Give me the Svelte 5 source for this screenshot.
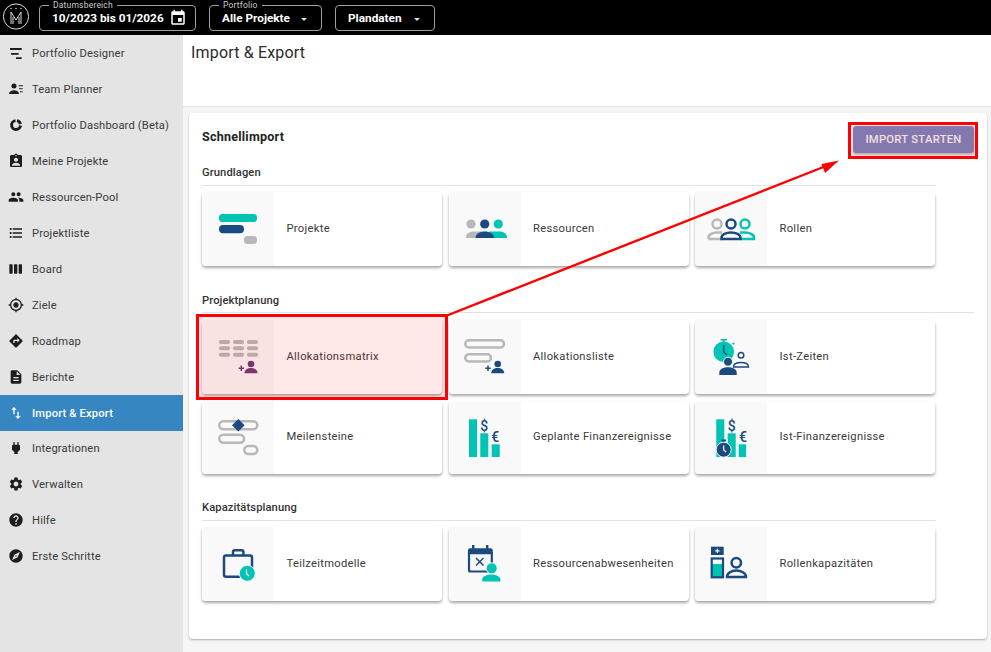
<script>
  const nav = [
    { label: 'Portfolio Designer', icon: 'designer' },
    { label: 'Team Planner', icon: 'team' },
    { label: 'Portfolio Dashboard (Beta)', icon: 'donut' },
    { label: 'Meine Projekte', d: 'M19 3h-4.18C14.4 1.84 13.3 1 12 1c-1.3 0-2.4.84-2.82 2H5c-1.1 0-2 .9-2 2v14c0 1.1.9 2 2 2h14c1.1 0 2-.9 2-2V5c0-1.1-.9-2-2-2zm-7 0c.55 0 1 .45 1 1s-.45 1-1 1-1-.45-1-1 .45-1 1-1zm0 4c1.66 0 3 1.34 3 3s-1.34 3-3 3-3-1.34-3-3 1.34-3 3-3zm6 12H6v-1.4c0-2 4-3.1 6-3.1s6 1.1 6 3.1V19z' },
    { label: 'Ressourcen-Pool', d: 'M16 11c1.66 0 2.99-1.34 2.99-3S17.66 5 16 5c-1.66 0-3 1.34-3 3s1.34 3 3 3zm-8 0c1.66 0 2.99-1.34 2.99-3S9.66 5 8 5C6.34 5 5 6.34 5 8s1.34 3 3 3zm0 2c-2.33 0-7 1.17-7 3.5V19h14v-2.5c0-2.33-4.67-3.5-7-3.5zm8 0c-.29 0-.62.02-.97.05 1.16.84 1.97 1.97 1.97 3.45V19h6v-2.5c0-2.33-4.67-3.5-7-3.5z' },
    { label: 'Projektliste', d: 'M4 10.5c-.83 0-1.5.67-1.5 1.5s.67 1.5 1.5 1.5 1.5-.67 1.5-1.5-.67-1.5-1.5-1.5zm0-6c-.83 0-1.5.67-1.5 1.5S3.17 7.5 4 7.5 5.5 6.83 5.5 6 4.83 4.5 4 4.5zm0 12c-.83 0-1.5.68-1.5 1.5s.68 1.5 1.5 1.5 1.5-.68 1.5-1.5-.67-1.5-1.5-1.5zM7 19h14v-2H7v2zm0-6h14v-2H7v2zm0-8v2h14V5H7z' },
    { label: 'Board', d: 'M6 5H3c-.55 0-1 .45-1 1v12c0 .55.45 1 1 1h3c.55 0 1-.45 1-1V6c0-.55-.45-1-1-1zm14 0h-3c-.55 0-1 .45-1 1v12c0 .55.45 1 1 1h3c.55 0 1-.45 1-1V6c0-.55-.45-1-1-1zm-7 0h-3c-.55 0-1 .45-1 1v12c0 .55.45 1 1 1h3c.55 0 1-.45 1-1V6c0-.55-.45-1-1-1z' },
    { label: 'Ziele', d: 'M12 8c-2.21 0-4 1.79-4 4s1.79 4 4 4 4-1.79 4-4-1.79-4-4-4zm8.94 3c-.46-4.17-3.77-7.48-7.94-7.94V1h-2v2.06C6.83 3.52 3.52 6.83 3.06 11H1v2h2.06c.46 4.17 3.77 7.48 7.94 7.94V23h2v-2.06c4.17-.46 7.48-3.77 7.94-7.94H23v-2h-2.06zM12 19c-3.87 0-7-3.13-7-7s3.13-7 7-7 7 3.13 7 7-3.13 7-7 7z' },
    { label: 'Roadmap', d: 'M21.71 11.29l-9-9c-.39-.39-1.02-.39-1.41 0l-9 9c-.39.39-.39 1.02 0 1.41l9 9c.39.39 1.02.39 1.41 0l9-9c.39-.38.39-1.01 0-1.41zM14 14.5V12h-4v3H8v-4c0-.55.45-1 1-1h5V7.5l3.5 3.5-3.5 3.5z' },
    { label: 'Berichte', d: 'M14 2H6c-1.1 0-1.99.9-1.99 2L4 20c0 1.1.89 2 1.99 2H18c1.1 0 2-.9 2-2V8l-6-6zm2 16H8v-2h8v2zm0-4H8v-2h8v2zm-3-5V3.5L18.5 9H13z' },
    { label: 'Import & Export', d: 'M9 3L5 6.99h3V14h2V6.99h3L9 3zm7 14.01V10h-2v7.01h-3L15 21l4-3.99h-3z', active: true },
    { label: 'Integrationen', d: 'M16.01 7L16 3h-2v4h-4V3H8v4h-.01C7 6.99 6 7.99 6 8.99v5.49L9.5 18v3h5v-3l3.5-3.51v-5.5c0-1-1-2-1.99-1.99z' },
    { label: 'Verwalten', d: 'M19.14 12.94c.04-.3.06-.61.06-.94 0-.32-.02-.64-.07-.94l2.03-1.58c.18-.14.23-.41.12-.61l-1.92-3.32c-.12-.22-.37-.29-.59-.22l-2.39.96c-.5-.38-1.03-.7-1.62-.94l-.36-2.54c-.04-.24-.24-.41-.48-.41h-3.84c-.24 0-.43.17-.47.41l-.36 2.54c-.59.24-1.13.57-1.62.94l-2.39-.96c-.22-.08-.47 0-.59.22L2.74 8.87c-.12.21-.08.47.12.61l2.03 1.58c-.05.3-.09.63-.09.94s.02.64.07.94l-2.03 1.58c-.18.14-.23.41-.12.61l1.92 3.32c.12.22.37.29.59.22l2.39-.96c.5.38 1.03.7 1.62.94l.36 2.54c.05.24.24.41.48.41h3.84c.24 0 .44-.17.47-.41l.36-2.54c.59-.24 1.13-.56 1.62-.94l2.39.96c.22.08.47 0 .59-.22l1.92-3.32c.12-.22.07-.47-.12-.61l-2.01-1.58zM12 15.6c-1.98 0-3.6-1.62-3.6-3.6s1.62-3.6 3.6-3.6 3.6 1.62 3.6 3.6-1.62 3.6-3.6 3.6z' },
    { label: 'Hilfe', d: 'M12 2C6.48 2 2 6.48 2 12s4.48 10 10 10 10-4.48 10-10S17.52 2 12 2zm1 17h-2v-2h2v2zm2.07-7.75l-.9.92C13.45 12.9 13 13.5 13 15h-2v-.5c0-1.1.45-2.1 1.17-2.83l1.24-1.26c.37-.36.59-.86.59-1.41 0-1.1-.9-2-2-2s-2 .9-2 2H8c0-2.21 1.79-4 4-4s4 1.79 4 4c0 .88-.36 1.68-.93 2.25z' },
    { label: 'Erste Schritte', d: 'M12 10.9c-.61 0-1.1.49-1.1 1.1s.49 1.1 1.1 1.1c.61 0 1.1-.49 1.1-1.1s-.49-1.1-1.1-1.1zM12 2C6.48 2 2 6.48 2 12s4.48 10 10 10 10-4.48 10-10S17.52 2 12 2zm2.19 12.19L6 18l3.81-8.19L18 6l-3.81 8.19z' }
  ];

  const sections = [
    {
      title: 'Grundlagen',
      cls: 'grundlagen',
      rows: [[
        { label: 'Projekte', icon: 'projekte' },
        { label: 'Ressourcen', icon: 'ressourcen' },
        { label: 'Rollen', icon: 'rollen' }
      ]]
    },
    {
      title: 'Projektplanung',
      cls: 'planung',
      rows: [
        [
          { label: 'Allokationsmatrix', icon: 'matrix', tinted: true },
          { label: 'Allokationsliste', icon: 'liste' },
          { label: 'Ist-Zeiten', icon: 'zeiten' }
        ],
        [
          { label: 'Meilensteine', icon: 'meilensteine' },
          { label: 'Geplante Finanzereignisse', icon: 'geplant' },
          { label: 'Ist-Finanzereignisse', icon: 'ist' }
        ]
      ]
    },
    {
      title: 'Kapazitätsplanung',
      cls: 'kapazitaet',
      rows: [[
        { label: 'Teilzeitmodelle', icon: 'teilzeit' },
        { label: 'Ressourcenabwesenheiten', icon: 'abwesend' },
        { label: 'Rollenkapazitäten', icon: 'kapazitaeten' }
      ]]
    }
  ];
</script>

{#snippet person(x, y)}
  <path class="plus-n" d="M{x - 9.7} {y + 1.6}v5.4M{x - 12.4} {y + 4.3}h5.4" />
  <circle class="navy" cx={x} cy={y} r="3.3" />
  <path class="navy" d="M{x - 6.5} {y + 9.3} c0 -3.6 3 -5.3 6.5 -5.3 s6.5 1.700 6.5 5.3 z" />
{/snippet}

{#snippet cardIcon(name)}
  <svg class="card-icon" viewBox="0 0 72 74" width="72" height="74">
    {#if name === 'projekte'}
      <rect class="teal" x="17" y="22" width="38" height="8" rx="3.5" />
      <rect class="navy" x="17" y="33" width="25" height="8.3" rx="4" />
      <rect class="grey" x="42" y="44" width="13" height="8" rx="3.5" />
    {:else if name === 'ressourcen'}
      <circle class="grey" cx="22" cy="32" r="4.6" />
      <path class="grey" d="M17 46v-1c0-3.5 4-5.5 8-5.5h8v6.5z" />
      <circle class="teal" cx="49.3" cy="32" r="4.6" />
      <path class="teal" d="M40 39.5h10c4 0 8 2 8 5.5v1H40z" />
      <circle class="navy" cx="35.7" cy="32" r="4.6" />
      <path class="navy" d="M26.5 46c0-4 4-6.5 9.2-6.5s9.3 2.5 9.3 6.5z" />
    {:else if name === 'rollen'}
      <g class="outline heavy">
        <g class="s-grey">
          <circle cx="22" cy="32" r="4.5" />
          <path d="M13.500 47v-1.500c0-3 4-5 8.500-5h5M13.500 47h14" />
        </g>
        <g class="s-teal">
          <circle cx="50" cy="32" r="4.5" />
          <path d="M45 40.500h5c4.500 0 9 2 9 5V47H46" />
        </g>
        <g class="s-navy">
          <circle cx="36" cy="32" r="4.5" />
          <path d="M26.500 47v-1c0-3.500 4.500-5.500 9.500-5.500s9.500 2 9.500 5.500v1z" />
        </g>
      </g>
    {:else if name === 'matrix'}
      {#each [20, 26.3, 32.7] as y}
        {#each [17, 31, 45] as x}
          <rect class="grey" {x} {y} width="11" height="4" rx="1.8" />
        {/each}
      {/each}
      {@render person(49, 44)}
    {:else if name === 'liste'}
      <g class="outline heavy s-grey">
        <rect x="16.3" y="20.3" width="38.7" height="7.2" rx="3.6" />
        <rect x="16.3" y="34.3" width="25.7" height="7.2" rx="3.6" />
      </g>
      {@render person(48.7, 44)}
    {:else if name === 'zeiten'}
      <circle class="teal" cx="28.7" cy="31.7" r="10.3" />
      <path class="teal" d="M25.5 19h6.5v1.5h-2.3v2h-2v-2h-2.2z" />
      <path class="teal" d="M37 23.5l1.3-1.3 1.5 1.5-1.3 1.3z" />
      <path class="hand" d="M28.7 25v7l3.5 3" />
      <circle class="navy ringed" cx="33" cy="41.7" r="4.5" />
      <path class="navy" d="M24.3 55v-2.5c0-3.5 4.5-5.3 8.7-5.3s8.7 1.8 8.7 5.3V55z" />
      <g class="outline s-navy thin">
        <circle cx="46" cy="35.3" r="2.8" />
        <path d="M38.5 47c0-3 3.5-4.5 7.5-4.5s7.5 1.5 7.5 4.5z" />
      </g>
    {:else if name === 'meilensteine'}
      <g class="outline heavy s-grey">
        <rect x="17.3" y="20.3" width="38" height="8" rx="4" />
        <rect x="17.3" y="33.7" width="24.7" height="8" rx="4" />
        <rect x="42.3" y="45" width="13" height="8" rx="4" />
      </g>
      <path class="navy" d="M36.3 18l6.3 6.3-6.3 6.3-6.3-6.3z" />
    {:else if name === 'geplant'}
      <rect class="teal" x="20" y="18.3" width="8" height="37.7" />
      <rect class="teal" x="31.3" y="32.3" width="8" height="23.7" />
      <rect class="teal" x="42.7" y="43.3" width="8" height="12.7" />
      <text class="cur" x="35.3" y="30">$</text>
      <text class="cur" x="46.3" y="41">€</text>
    {:else if name === 'ist'}
      <rect class="teal" x="21.3" y="18.3" width="8" height="37.7" />
      <rect class="teal" x="32.7" y="32.3" width="8" height="23.7" />
      <rect class="teal" x="43.7" y="43.3" width="7.4" height="12.7" />
      <text class="cur" x="36.7" y="30">$</text>
      <text class="cur" x="48" y="41">€</text>
      <circle class="navy ringed" cx="28.7" cy="48.7" r="7.5" />
      <path class="navy" d="M26.5 38.5h4.5v2h-4.5z" />
      <path class="hand w" d="M28.7 44.5v4.5l2.5 2" />
    {:else if name === 'teilzeit'}
      <g class="outline heavy s-navy">
        <path d="M31 28.5v-3.500c0-1 .8-1.700 1.700-1.700h7c1 0 1.700.7 1.700 1.700v3.500" />
        <path d="M50 42v-11.500c0-1-.8-2-2-2H24c-1.200 0-2 1-2 2v17.500c0 1 .8 1.700 2 1.700H38" />
      </g>
      <circle class="teal ringed" cx="45.3" cy="46.3" r="8" />
      <path class="hand w" d="M44.5 42v4.5l2.5 2.5" />
    {:else if name === 'abwesend'}
      <rect class="navy" x="19" y="21.3" width="24.7" height="6" rx="2" />
      <rect class="navy" x="23" y="18" width="2.4" height="5" />
      <rect class="navy" x="37" y="18" width="2.4" height="5" />
      <path class="outline s-navy" d="M20 25v18c0 1 .7 1.500 1.500 1.500h20c.8 0 1.300-.5 1.300-1.500V25" />
      <path class="hand" d="M27 31l7.5 7.5M34.500 31l-7.500 7.500" />
      <circle class="teal ringed" cx="42.7" cy="41.3" r="5.5" />
      <path class="teal ringed" d="M32.700 55v-2c0-3.500 4.500-6 9.500-6s9.800 2.500 9.800 6v2z" />
    {:else if name === 'kapazitaeten'}
      <rect class="navy" x="16" y="19.7" width="12.7" height="8.3" />
      <path class="plus-w" d="M22.300 21.700v4.300M20.200 23.800h4.300" />
      <rect class="teal" x="16.5" y="37" width="11.7" height="13" />
      <rect class="outline s-navy" x="16.7" y="31.5" width="11.3" height="18.8" />
      <g class="outline heavy s-navy">
        <circle cx="41.3" cy="35.7" r="4.7" />
        <path d="M32 50c0-4 4.500-6.500 9.300-6.500s9.700 2.500 9.700 6.500z" />
      </g>
    {/if}
  </svg>
{/snippet}

<div class="app">
  <header class="topbar">
    <svg class="logo" viewBox="0 0 26 28" width="26" height="28">
      <circle cx="13" cy="13.5" r="12.6" />
      <path d="M8 21V9l5 8 5-8v12M10 21v-7M16 21v-7" />
      <path class="dots" d="M8 5.500v.1M13 5.500v.1M18 5.500v.1" />
    </svg>

    <fieldset class="field date">
      <legend>Datumsbereich</legend>
      <span class="value">10/2023 bis 01/2026</span>
      <svg class="cal" viewBox="0 0 24 24" width="18" height="18"><path d="M17 12h-5v5h5v-5zM16 1v2H8V1H6v2H5c-1.110 0-1.990.9-1.990 2L3 19c0 1.100.89 2 2 2h14c1.100 0 2-.9 2-2V5c0-1.100-.9-2-2-2h-1V1h-2zm3 18H5V8h14v11z" /></svg>
    </fieldset>

    <fieldset class="field portfolio">
      <legend>Portfolio</legend>
      <span class="value">Alle Projekte</span>
      <span class="caret"></span>
    </fieldset>

    <fieldset class="field plandaten no-legend">
      <span class="value">Plandaten</span>
      <span class="caret"></span>
    </fieldset>
  </header>

  <nav class="sidebar">
    {#each nav as item}
      <a class="nav-item" class:active={item.active} href="#top">
        <svg class="nav-icon" viewBox="0 0 24 24" width="16" height="16">
          {#if item.icon === 'designer'}
            <path d="M3 4.500h17.500v3H3zM4.500 12H16v2.500H4.500zM12 18.500h8.500v2.500H12z" />
          {:else if item.icon === 'team'}
            <circle cx="9" cy="7.500" r="3.800" />
            <path d="M1.500 19.500c0-3.500 3.500-5.500 7.500-5.500s7.500 2 7.500 5.500zM16 6.500h6.500V8H16zM16.500 11h5.500v1.500h-5.500zM18 15.500h4V17h-4z" />
          {:else if item.icon === 'donut'}
            <path class="ring" d="M18.700 12.800A6.700 6.700 0 1 1 11.300 5.400" />
            <path class="ring" d="M13.500 5.500A6.700 6.700 0 0 1 18.600 10.600" />
          {:else}
            <path d={item.d} />
          {/if}
        </svg>
        <span>{item.label}</span>
      </a>
    {/each}
  </nav>

  <main class="content">
    <div class="page-head">
      <h1>Import &amp; Export</h1>
    </div>

    <section class="panel">
      <div class="panel-head">
        <h2>Schnellimport</h2>
        <button class="start">IMPORT STARTEN</button>
      </div>

      {#each sections as section}
        <div class="group {section.cls}">
          <h3>{section.title}</h3>
          {#each section.rows as row}
            <div class="cards">
              {#each row as card}
                <div class="card" class:tinted={card.tinted}>
                  <div class="card-left">{@render cardIcon(card.icon)}</div>
                  <span class="card-label">{card.label}</span>
                </div>
              {/each}
            </div>
          {/each}
        </div>
      {/each}
    </section>
  </main>

  <!-- Annotation drawn on top of the screenshot -->
  <svg class="markup" viewBox="0 0 991 652" width="991" height="652">
    <rect x="197.5" y="315.5" width="249" height="83" />
    <rect x="849.5" y="123.5" width="127" height="34" />
    <path class="arrow-line" d="M447 315.5L826 166" />
    <path class="arrow-head" d="M839 160.5L821.5 164L825 173z" />
  </svg>
</div>

<style>
  :global(body) {
    margin: 0;
    background: #f5f5f5;
  }

  .app {
    position: relative;
    display: grid;
    grid-template-columns: 183px 1fr;
    grid-template-rows: 35px 1fr;
    height: 652px;
    overflow: hidden;
    font-family: Roboto, 'Liberation Sans', sans-serif;
    color: #333;
  }

  .topbar {
    grid-column: 1 / -1;
    display: flex;
    align-items: flex-start;
    background: #000;
    color: #fff;
    padding: 3px 0 0 3px;
  }

  .logo {
    fill: none;
    stroke: #ddd;
    stroke-width: 1;
    flex: none;
  }

  .logo .dots {
    stroke-linecap: round;
    stroke-width: 1.5;
  }

  .field {
    display: flex;
    align-items: center;
    box-sizing: border-box;
    height: 30px;
    margin: 0;
    min-width: 0;
    padding: 0 0 3px 12px;
    border: 1px solid #a0a0a0;
    border-radius: 4px;
    position: relative;
    top: -2px;
  }

  .field legend {
    padding: 0 4px;
    margin-left: -3px;
    font-size: 8.5px;
    line-height: 8px;
    color: #ccc;
    letter-spacing: 0.2px;
  }

  .no-legend {
    height: 26px;
    top: 2px;
    padding-bottom: 0;
  }

  .date {
    width: 157px;
    margin-left: 10px;
  }

  .portfolio {
    width: 113px;
    margin-left: 13px;
  }

  .plandaten {
    width: 100px;
    margin-left: 13px;
  }

  .value {
    font-size: 11.8px;
    font-weight: 700;
    white-space: nowrap;
  }

  .cal {
    fill: #fff;
    margin: 0 8px 0 auto;
  }

  .caret {
    width: 0;
    height: 0;
    margin: 2px 14px 0 auto;
    border: 3.5px solid transparent;
    border-top-color: #ddd;
    border-bottom: 0;
  }

  .sidebar {
    display: flex;
    flex-direction: column;
    background: #e4e4e4;
  }

  .nav-item {
    display: flex;
    align-items: center;
    flex: none;
    height: 36px;
    padding-left: 8px;
    color: #3a3a3a;
    font-size: 11.2px;
    letter-spacing: 0.15px;
    text-decoration: none;
  }

  .nav-item.active {
    margin-bottom: -1px;
    background: #3686c1;
    color: #fff;
    font-weight: 500;
  }

  .nav-icon {
    flex: none;
    margin-right: 8px;
    fill: #1d1d1d;
  }

  .nav-icon .ring {
    fill: none;
    stroke: #1d1d1d;
    stroke-width: 4.4;
  }

  .active .nav-icon {
    fill: #fff;
  }

  .content {
    display: flex;
    flex-direction: column;
    min-width: 0;
  }

  .page-head {
    box-sizing: border-box;
    height: 72px;
    padding: 8px 8px 0;
    background: #fff;
    border-bottom: 1px solid #e2e2e2;
  }

  h1 {
    margin: 0;
    font-size: 16px;
    line-height: 19px;
    font-weight: 400;
    letter-spacing: 0.17px;
    color: #2b2b2b;
  }

  .panel {
    box-sizing: border-box;
    height: 526px;
    margin: 6px 4px 0 6px;
    padding: 0 13px;
    background: #fff;
    border-radius: 4px;
    box-shadow: 0 1px 2px rgba(0, 0, 0, 0.3);
  }

  .panel-head {
    display: flex;
    justify-content: space-between;
    height: 44px;
  }

  h2 {
    margin: 15.5px 0 0;
    font-size: 12.5px;
    line-height: 15px;
    font-weight: 700;
    letter-spacing: 0.25px;
    color: #222;
  }

  .start {
    width: 121px;
    height: 27px;
    margin: 13px 0 0;
    padding: 0;
    border: 0;
    border-radius: 3px;
    background: #7886c0;
    color: #f4f4f4;
    font: 500 11.2px Roboto, 'Liberation Sans', sans-serif;
    letter-spacing: 0.3px;
    box-shadow: 0 2px 2px rgba(0, 0, 0, 0.25);
  }

  .group h3 {
    margin: 0 0 6px;
    padding-bottom: 5px;
    border-bottom: 1px solid #e2e2e2;
    font-size: 11.2px;
    line-height: 15px;
    font-weight: 500;
    letter-spacing: 0.1px;
    color: #333;
  }

  .grundlagen {
    margin-top: 8px;
    margin-right: 38px;
  }

  .planung {
    margin-top: 27.5px;
  }

  .planung h3 {
    margin-bottom: 7px;
    padding-bottom: 4px;
  }

  .kapazitaet {
    margin-top: 26px;
    margin-right: 38px;
  }

  .cards {
    display: grid;
    grid-template-columns: repeat(3, 240px);
    column-gap: 6.5px;
  }

  .cards + .cards {
    margin-top: 7px;
  }

  .card {
    display: flex;
    align-items: center;
    height: 73.5px;
    background: #fff;
    border-radius: 4px;
    overflow: hidden;
    box-shadow: 0 2px 3px rgba(0, 0, 0, 0.35);
    --navy: #1b4a80;
    --teal: #00c4b3;
    --grey: #b8b8b8;
  }

  .card.tinted {
    --navy: #743a7a;
  }

  .card-left {
    flex: none;
    width: 72px;
    height: 100%;
    background: #f9f9f9;
  }

  .card-label {
    margin-left: 12.5px;
    padding-bottom: 1px;
    font-size: 11.2px;
    letter-spacing: 0.3px;
    color: #3a3a3a;
  }

  .card-icon {
    display: block;
  }

  .teal {
    fill: var(--teal);
  }

  .navy {
    fill: var(--navy);
  }

  .grey {
    fill: var(--grey);
  }

  .outline {
    fill: none;
    stroke-width: 2.2;
  }

  .heavy {
    stroke-width: 2.5;
  }

  .thin {
    stroke-width: 1.5;
  }

  .s-grey {
    stroke: var(--grey);
  }

  .s-navy {
    stroke: var(--navy);
  }

  .s-teal {
    stroke: var(--teal);
  }

  .ringed {
    stroke: #f9f9f9;
    stroke-width: 1;
  }

  .hand {
    fill: none;
    stroke: var(--navy);
    stroke-width: 1.5;
  }

  .hand.w,
  .plus-w {
    fill: none;
    stroke: #fff;
    stroke-width: 1.2;
  }

  .plus-n {
    fill: none;
    stroke: var(--navy);
    stroke-width: 1.5;
  }

  .cur {
    fill: var(--navy);
    font-size: 14px;
    font-weight: 500;
    text-anchor: middle;
  }

  .markup {
    position: absolute;
    left: 0;
    top: 0;
    pointer-events: none;
  }

  .markup rect {
    fill: rgba(255, 0, 0, 0.09);
    stroke: #f00;
    stroke-width: 3;
  }

  .arrow-line {
    fill: none;
    stroke: #f00;
    stroke-width: 2.4;
  }

  .arrow-head {
    fill: #f00;
  }
</style>
